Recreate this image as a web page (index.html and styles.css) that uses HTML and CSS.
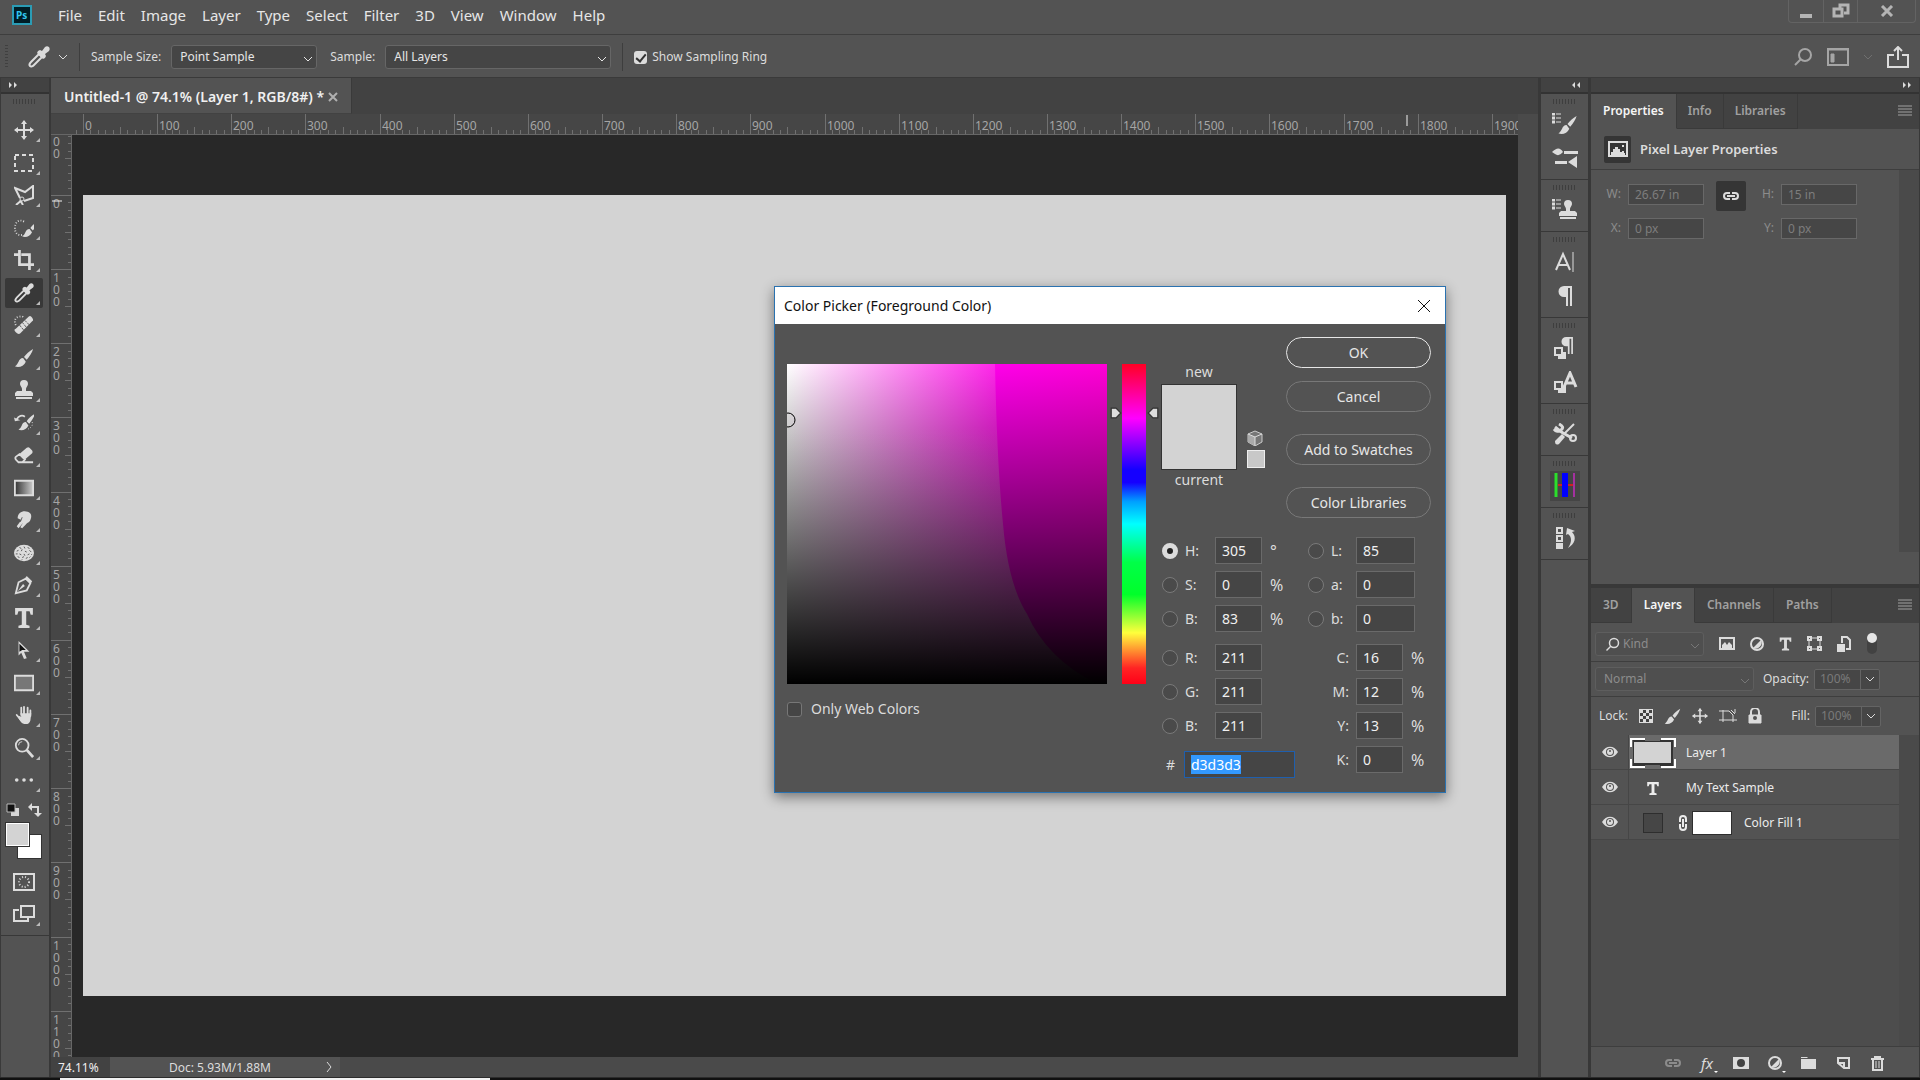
FILE: index.html
```html
<!DOCTYPE html>
<html lang="en">
<head>
    <meta charset="UTF-8">
    <meta name="viewport" content="width=device-width, initial-scale=1.0">
    <title>Untitled-1 @ 74.1%</title>
    <link rel="stylesheet" href="styles.css">
</head>
<body>
    <svg class="defs" aria-hidden="true">
        <symbol id="chevron" viewBox="0 0 10 10"><path d="M1 3l4 4 4-4" fill="none" stroke="currentColor"/></symbol>
        <symbol id="brush" viewBox="0 0 22 22"><path d="M21 1c-4 2-8 6-10 9l3 3c3-4 6-8 7-12zM10 11c-3 0-4 2-5 4-1 2-2 4-4 5 4 2 10 0 12-5z" fill="currentColor"/></symbol>
        <symbol id="move" viewBox="0 0 20 20"><path d="M10 1v18M1 10h18" stroke="currentColor" stroke-width="2"/><path d="M10 0l3 4H7zM10 20l3-4H7zM0 10l4-3v6zM20 10l-4-3v6z" fill="currentColor"/></symbol>
        <symbol id="dropper" viewBox="0 0 22 22"><path d="M2 20c-1-1 0-3 1-4l8-8 3 3-8 8c-1 1-3 2-4 1z" fill="none" stroke="currentColor" stroke-width="2"/><path d="M10 5l2-1 2 1 3-4c3-2 6 1 4 4l-4 3 1 2-1 2-2 1-6-6z" fill="currentColor"/></symbol>
        <symbol id="stamp" viewBox="0 0 20 20"><path d="M10 0a4 4 0 0 1 4 4c0 2-2 3-2 5v2h5l2 2v3H1v-3l2-2h5V9c0-2-2-3-2-5a4 4 0 0 1 4-4zM2 17h16v2H2z" fill="currentColor"/></symbol>
        <symbol id="type" viewBox="0 0 18 18"><path d="M1 0h16v6h-2l-1-3h-3v12l3 1v2H4v-2l3-1V3H4L3 6H1z" fill="currentColor"/></symbol>
        <symbol id="half" viewBox="0 0 14 14"><circle cx="7" cy="7" r="6" fill="none" stroke="currentColor" stroke-width="2"/><path d="M11 3A6 6 0 0 1 3 11z" fill="currentColor"/></symbol>
        <symbol id="link" viewBox="0 0 18 10"><path d="M8 2H5a3 3 0 0 0 0 6h3M10 2h3a3 3 0 0 1 0 6h-3M5 5h8" fill="none" stroke="currentColor" stroke-width="2"/></symbol>
        <symbol id="search" viewBox="0 0 20 20"><circle cx="12" cy="8" r="6" fill="none" stroke="currentColor" stroke-width="2"/><path d="M8 12l-6 6" stroke="currentColor" stroke-width="2"/></symbol>
        <symbol id="eye" viewBox="0 0 16 12"><path d="M0 6c4-7 12-7 16 0-4 7-12 7-16 0z" fill="currentColor"/><circle cx="8" cy="6" r="4" fill="#535353"/><circle cx="8" cy="6" r="3" fill="currentColor"/><circle cx="8" cy="5" r="1" fill="#535353"/></symbol>
        <symbol id="lines" viewBox="0 0 14 12"><path d="M0 2h14M0 5h14M0 8h14M0 11h14" stroke="currentColor"/></symbol>
        <symbol id="list" viewBox="0 0 10 12"><path d="M0 1h3M0 5h3M0 9h3" stroke="currentColor" stroke-width="3"/><path d="M4 1h5M4 5h5M4 9h5" stroke="currentColor"/></symbol>
        <symbol id="pilcrow" viewBox="0 0 16 20"><path d="M15 0v20h-2V2h-2v18H9v-9H7A5 5 0 0 1 7 0z" fill="currentColor"/></symbol>
        <symbol id="squares" viewBox="0 0 12 12"><path d="M5 5h7v7H4V9h4V5z" fill="currentColor"/><path d="M1 1h7v7H1z" fill="#535353" stroke="currentColor" stroke-width="2"/></symbol>
    </svg>

    <header class="menubar">
        <svg class="app-logo" viewBox="0 0 20 20"><rect x="1" y="1" width="18" height="18" fill="#001d26" stroke="#2b9cb5" stroke-width="2"/><text x="4" y="14">Ps</text></svg>
        <nav class="menus">
            <button>File</button><button>Edit</button><button>Image</button><button>Layer</button><button>Type</button><button>Select</button><button>Filter</button><button>3D</button><button>View</button><button>Window</button><button>Help</button>
        </nav>
        <div class="window-buttons">
            <button aria-label="Minimize"><svg width="14" height="16" viewBox="0 0 14 16"><path d="M1 11h12v4H1z" fill="currentColor"/></svg></button>
            <button aria-label="Restore"><svg width="18" height="16" viewBox="0 0 18 16"><path d="M8 5V2h8v8h-4M2 6h8v7H2z" fill="none" stroke="currentColor" stroke-width="3"/></svg></button>
            <button aria-label="Close"><svg width="14" height="12" viewBox="0 0 14 12"><path d="M2 1l10 10M12 1L2 11" stroke="currentColor" stroke-width="3"/></svg></button>
        </div>
    </header>

    <div class="optionsbar">
        <span class="side-grip"></span>
        <svg class="option-tool" viewBox="0 0 22 22"><use href="#dropper"/></svg>
        <svg class="chev" viewBox="0 0 10 10"><use href="#chevron"/></svg>
        <span class="divider"></span>
        <label for="sampleSize">Sample Size:</label>
        <span class="select size-select"><select id="sampleSize"><option>Point Sample</option></select><svg class="chev"><use href="#chevron"/></svg></span>
        <label for="sample">Sample:</label>
        <span class="select sample-select"><select id="sample"><option>All Layers</option></select><svg class="chev"><use href="#chevron"/></svg></span>
        <span class="divider"></span>
        <label class="ring"><input type="checkbox" checked>Show Sampling Ring</label>
        <div class="option-right">
            <svg width="20" height="20" class="soft"><use href="#search"/></svg>
            <svg width="22" height="18" viewBox="0 0 22 18" class="soft"><path d="M1 1h20v16H1z" fill="none" stroke="currentColor" stroke-width="2"/><path d="M0 2h22M4 6h3v8H4z" stroke="currentColor"/><path d="M4 6h3v8H4z" fill="currentColor"/></svg>
            <svg class="chev dim"><use href="#chevron"/></svg>
            <svg width="22" height="22" viewBox="0 0 22 22"><path d="M7 9H1v12h20V9h-6M11 14V1M7 5l4-4 4 4" fill="none" stroke="currentColor" stroke-width="2"/></svg>
        </div>
    </div>

    <main class="workspace">
        <aside class="toolbox">
            <div class="dock-head"><svg width="8" height="6" viewBox="0 0 8 6"><path d="M0 0v6l3-3zM5 0v6l3-3z" fill="currentColor"/></svg></div>
            <div class="grip"></div>
            <div class="tools">
                <button aria-label="Move"><svg><use href="#move"/></svg></button>
                <button aria-label="Marquee"><svg viewBox="0 0 20 20"><path d="M1 2h18v16H1z" fill="none" stroke="currentColor" stroke-width="2" stroke-dasharray="4 3"/></svg></button>
                <button aria-label="Lasso"><svg viewBox="0 0 20 20"><path d="M6 13L1 3l10 4 8-6v12l-9 3M9 14L2 20M6 15l3 5" fill="none" stroke="currentColor" stroke-width="2"/><circle cx="8" cy="14" r="2" fill="#535353" stroke="currentColor"/></svg></button>
                <button aria-label="Quick selection"><svg viewBox="0 0 22 22"><path d="M11 4C6 1 1 4 1 11s5 9 9 7" fill="none" stroke="currentColor" stroke-width="2" stroke-dasharray="1 2"/><svg x="8" y="2" width="15" height="17"><use href="#brush"/></svg></svg></button>
                <button aria-label="Crop"><svg viewBox="0 0 22 22"><path d="M6 0v16h10M0 5h5M8 5h9v17M18 16h4" fill="none" stroke="currentColor" stroke-width="3"/></svg></button>
                <button class="active" aria-label="Eyedropper"><svg><use href="#dropper"/></svg></button>
                <button aria-label="Healing brush"><svg viewBox="0 0 22 22"><path d="M2 11C0 7 1 3 5 2s5 0 5 1" fill="none" stroke="currentColor" stroke-dasharray="1 2" stroke-width="2"/><path d="M2 15L16 2q2-2 4 1t0 4L7 20q-2 2-5-1t0-4z" fill="currentColor"/><path d="M6 11l5 6M9 8l5 6M12 6l5 5" stroke="#535353" stroke-dasharray="3 1"/></svg></button>
                <button aria-label="Brush"><svg><use href="#brush"/></svg></button>
                <button aria-label="Clone stamp"><svg><use href="#stamp"/></svg></button>
                <button aria-label="History brush"><svg viewBox="0 0 22 22"><svg x="4" width="18" height="22"><use href="#brush"/></svg><path d="M3 7c2-4 6-5 9-3" fill="none" stroke="currentColor" stroke-width="2"/><path d="M0 5l1 4 6-1z" fill="currentColor"/><path d="M20 10c1 4-1 6-5 8" fill="none" stroke="currentColor" stroke-dasharray="1 2"/></svg></button>
                <button aria-label="Eraser"><svg viewBox="0 0 22 22"><path d="M6 10l8-7q2-1 3 0l3 3q1 2 0 3l-8 7z" fill="currentColor"/><path d="M6 10l6 6-3 3H5l-3-3q-1-2 0-3zM8 19h13" fill="none" stroke="currentColor" stroke-width="2"/></svg></button>
                <button aria-label="Gradient"><svg viewBox="0 0 22 18"><defs><linearGradient id="toolGradient"><stop stop-color="#333"/><stop offset="1" stop-color="#ccc"/></linearGradient></defs><path d="M1 1h20v16H1z" fill="url(#toolGradient)" stroke="currentColor" stroke-width="2"/></svg></button>
                <button aria-label="Smudge"><svg viewBox="0 0 22 22"><path d="M4 9c0-6 6-9 11-7 4 1 5 5 3 9-1 3-4 3-5 5l-4 4-2-1 3-5-5 6-2-2 5-7z" fill="currentColor"/><path d="M9 8l-2 5" stroke="#535353"/></svg></button>
                <button aria-label="Sponge"><svg viewBox="0 0 22 22"><ellipse cx="11" cy="11" rx="11" ry="9" fill="currentColor"/><path d="M6 5l2 1M11 4l1 2M15 5l2 1M3 9l2-1M8 9l1-2M12 9l2 1M17 8l2 2M2 12h2M6 12l2 1M11 12l1 2M15 13l2-1M19 13l1-1M4 15l2 1M9 16l2-1M13 17l2-1M17 16l1-1M8 19l1-1" stroke="#535353"/></svg></button>
                <button aria-label="Pen"><svg viewBox="0 0 22 22"><path d="M2 20L5 8l8-4 5 5-4 8z" fill="none" stroke="currentColor" stroke-width="2"/><path d="M14 1l6 6-2 3-6-6zM10 10l2 2-8 6z" fill="currentColor"/></svg></button>
                <button aria-label="Type"><svg><use href="#type"/></svg></button>
                <button aria-label="Path selection"><svg viewBox="0 0 22 22"><path d="M5 1l12 12h-6l3 7-3 1-3-7-3 3z" fill="currentColor"/><path d="M6 4v9l3-2h4z" fill="#111"/></svg></button>
                <button aria-label="Rectangle"><svg viewBox="0 0 22 18"><path d="M1 1h20v16H1z" fill="#777" stroke="currentColor" stroke-width="2"/></svg></button>
                <button aria-label="Hand"><svg viewBox="0 0 22 22"><path d="M8 11V3M11 10V2M15 10V3M18 12V6M3 11l5 6" stroke="currentColor" stroke-width="2" stroke-linecap="round"/><path d="M7 9h12l-1 8q-1 4-5 4c-5 0-6-3-9-8l2-1 2 1z" fill="currentColor"/></svg></button>
                <button aria-label="Zoom"><svg viewBox="0 0 22 22"><circle cx="9" cy="8" r="7" fill="none" stroke="currentColor" stroke-width="2"/><path d="M14 13l7 8" stroke="currentColor" stroke-width="3"/><path d="M5 8q0-4 4-4" fill="none" stroke="currentColor"/></svg></button>
                <button aria-label="More tools"><svg viewBox="0 0 22 22"><circle cx="3" cy="11" r="2"/><circle cx="11" cy="11" r="2"/><circle cx="19" cy="11" r="2"/></svg></button>
            </div>
            <div class="color-tools">
                <svg width="14" height="14" viewBox="0 0 14 14"><path d="M5 5h8v8H5z" fill="#d6d6d6"/><path d="M1 1h8v8H1z" fill="#111" stroke="#bbb"/></svg>
                <svg width="14" height="14" viewBox="0 0 14 14"><path d="M3 4h7v7" fill="none" stroke="currentColor" stroke-width="2"/><path d="M0 4l4-4v8zM10 14l-4-4h8z" fill="currentColor"/></svg>
            </div>
            <div class="swatches"><button class="back" aria-label="Background color"></button><button class="front" aria-label="Foreground color"></button></div>
            <div class="view-tools">
                <button aria-label="Quick mask"><svg viewBox="0 0 22 18"><path d="M1 1h20v16H1z" fill="none" stroke="currentColor" stroke-width="2"/><circle cx="11" cy="9" r="5" fill="none" stroke="currentColor" stroke-width="2" stroke-dasharray="1 2"/></svg></button>
                <button aria-label="Screen mode"><svg viewBox="0 0 22 18"><path d="M6 5H1v11h14v-4M8 1h13v11H8z" fill="none" stroke="currentColor" stroke-width="2"/></svg></button>
            </div>
        </aside>

        <section class="document">
            <div class="doc-tabs"><div class="doc-tab"><span>Untitled-1 @ 74.1% (Layer 1, RGB/8#) *</span><button aria-label="Close document"><svg width="10" height="10" viewBox="0 0 10 10"><path d="M1 1l8 8M9 1L1 9" stroke="currentColor" stroke-width="2"/></svg></button></div></div>
            <div class="doc-area">
                <div class="ruler-corner"></div>
                <svg class="ruler ruler-top" id="rulerTop"></svg>
                <div class="scroll-top"></div>
                <svg class="ruler ruler-left" id="rulerLeft"></svg>
                <div class="canvas"><div class="artboard"></div></div>
                <div class="scroll-side"></div>
            </div>
            <footer class="statusbar"><span class="zoom-level">74.11%</span><span class="doc-size">Doc: 5.93M/1.88M</span><button aria-label="Status options"><svg width="6" height="12" viewBox="0 0 6 12"><path d="M1 1l4 5-4 5" fill="none" stroke="currentColor"/></svg></button></footer>
        </section>

        <aside class="icon-dock">
            <div class="dock-head right"><svg width="8" height="6" viewBox="0 0 8 6"><path d="M3 0v6L0 3zM8 0v6L5 3z" fill="currentColor"/></svg></div>
            <div class="dock-group"><div class="grip"></div>
                <button aria-label="Brushes"><svg viewBox="0 0 26 22"><svg width="10" height="12"><use href="#list"/></svg><svg x="5" y="2" width="21" height="20"><use href="#brush"/></svg></svg></button>
                <button aria-label="Brush settings"><svg viewBox="0 0 26 22"><path d="M0 5q7-7 11 0-4 5-8 2zM12 4h14v3H12zM3 14h12v3H3zM16 15l9-6v12z" fill="currentColor"/></svg></button>
            </div>
            <div class="dock-group"><div class="grip"></div>
                <button aria-label="Clone source"><svg viewBox="0 0 26 22"><svg width="10" height="12"><use href="#list"/></svg><svg x="6" y="1" width="20" height="20"><use href="#stamp"/></svg></svg></button>
            </div>
            <div class="dock-group"><div class="grip"></div>
                <button aria-label="Character"><svg viewBox="0 0 26 22"><path d="M4 19L11 3l7 16M7 14h8" fill="none" stroke="currentColor" stroke-width="2"/><path d="M21 1v20" stroke="currentColor"/></svg></button>
                <button aria-label="Paragraph"><svg viewBox="0 0 26 22"><svg x="5" y="1" width="16" height="20"><use href="#pilcrow"/></svg></svg></button>
            </div>
            <div class="dock-group"><div class="grip"></div>
                <button aria-label="Paragraph styles"><svg viewBox="0 0 26 22"><svg x="8" width="14" height="17"><use href="#pilcrow"/></svg><svg x="2" y="10" width="12" height="12"><use href="#squares"/></svg></svg></button>
                <button aria-label="Character styles"><svg viewBox="0 0 26 22"><path d="M12 16L18 2l6 14M14 12h8" fill="none" stroke="currentColor" stroke-width="3"/><svg x="2" y="10" width="12" height="12"><use href="#squares"/></svg></svg></button>
            </div>
            <div class="dock-group"><div class="grip"></div>
                <button aria-label="Tool presets"><svg viewBox="0 0 26 22"><path d="M3 4l5 4 3 2 9 5M2 6q3 4 7 1t-2-6" fill="none" stroke="currentColor" stroke-width="3"/><path d="M22 1L12 11" stroke="currentColor" stroke-width="2"/><path d="M10 11l3 3-6 7q-4 2-4-3z" fill="currentColor"/><circle cx="21" cy="15" r="3" fill="none" stroke="currentColor" stroke-width="2"/></svg></button>
            </div>
            <div class="dock-group"><div class="grip"></div>
                <button aria-label="Color channels"><svg class="channel-icon" viewBox="0 0 30 30"><path d="M0 0h30v30H0z" fill="#454545"/><path d="M6 2v24" stroke="#2bdf2b" stroke-width="3"/><path d="M15 2v24" stroke="#00f" stroke-width="6"/><path d="M24 2v24" stroke="#a3319f" stroke-width="2"/><path d="M8 14h4M18 14h5" stroke="#c22" stroke-width="2"/></svg></button>
            </div>
            <div class="dock-group"><div class="grip"></div>
                <button aria-label="History"><svg viewBox="0 0 26 22"><path d="M5 1h5v5H5zM5 9h5v5H5z" fill="none" stroke="currentColor" stroke-width="2"/><path d="M4 16h7v6H4z" fill="currentColor"/><path d="M14 8l1-7 8 3-3 1c5 5 3 12-4 16 4-6 4-11 0-14z" fill="currentColor"/></svg></button>
            </div>
        </aside>

        <aside class="panels">
            <div class="dock-head right"><svg width="8" height="6" viewBox="0 0 8 6"><path d="M0 0v6l3-3zM5 0v6l3-3z" fill="currentColor"/></svg></div>
            <section class="panel properties">
                <div class="panel-tabs"><button class="active">Properties</button><button>Info</button><button>Libraries</button><svg width="14" height="12"><use href="#lines"/></svg></div>
                <div class="prop-title"><span class="prop-icon"><svg width="20" height="16" viewBox="0 0 20 16"><path d="M1 1h18v14H1z" fill="none" stroke="currentColor" stroke-width="2"/><path d="M3 14v-3h2V8h2V6h3v2h2v3h2v-1h2v2h1v2zM14 4h2v2h-2z" fill="currentColor"/></svg></span>Pixel Layer Properties</div>
                <div class="prop-body">
                    <div class="prop-fields">
                        <label for="pw">W:</label><input id="pw" value="26.67 in" disabled>
                        <button class="link-size" aria-label="Link width and height"><svg width="18" height="10"><use href="#link"/></svg></button>
                        <label for="ph">H:</label><input id="ph" value="15 in" disabled>
                        <label for="px">X:</label><input id="px" value="0 px" disabled>
                        <label for="py" class="label-y">Y:</label><input id="py" value="0 px" disabled>
                    </div>
                    <div class="track"></div>
                </div>
            </section>
            <section class="panel layers">
                <div class="panel-tabs"><button>3D</button><button class="active">Layers</button><button>Channels</button><button>Paths</button><svg width="14" height="12"><use href="#lines"/></svg></div>
                <div class="layer-row filter-row">
                    <span class="select kind"><svg class="kind-icon"><use href="#search"/></svg><select aria-label="Filter kind"><option>Kind</option></select><svg class="chev"><use href="#chevron"/></svg></span>
                    <svg width="16" height="14" viewBox="0 0 16 14"><path d="M1 1h14v11H1z" fill="none" stroke="currentColor" stroke-width="2"/><path d="M3 11V8l3-3 2 3 2-3 3 3v3z" fill="currentColor"/></svg>
                    <svg width="14" height="14"><use href="#half"/></svg>
                    <svg width="13" height="14"><use href="#type"/></svg>
                    <svg width="15" height="15" viewBox="0 0 15 15"><path d="M2 2h11v11H2z" fill="none" stroke="currentColor"/><path d="M0 0h5v5H0zM10 0h5v5h-5zM0 10h5v5H0zM10 10h5v5h-5z" fill="currentColor"/><path d="M2 2h1v1H2zM12 2h1v1h-1zM2 12h1v1H2zM12 12h1v1h-1z" fill="#535353"/></svg>
                    <svg width="14" height="16" viewBox="0 0 14 16"><path d="M5 7V1h5l3 3v9H9" fill="none" stroke="currentColor" stroke-width="2"/><path d="M0 8h8v8H0z" fill="currentColor"/></svg>
                    <svg width="12" height="24" viewBox="0 0 12 24"><rect x="1" y="2" width="10" height="20" rx="5" fill="#424242"/><circle cx="6" cy="6" r="5" fill="#e6e6e6"/></svg>
                </div>
                <div class="layer-row blend-row">
                    <span class="select blend"><select aria-label="Blend mode"><option>Normal</option></select><svg class="chev"><use href="#chevron"/></svg></span>
                    <label for="opacity">Opacity:</label><span class="percent"><input id="opacity" value="100%"><button aria-label="Opacity slider"><svg class="chev"><use href="#chevron"/></svg></button></span>
                </div>
                <div class="layer-row lock-row">
                    <span>Lock:</span>
                    <svg width="14" height="14" viewBox="0 0 14 14"><path d="M0 0h14v14H0z" fill="currentColor"/><path d="M4 1h3v3H4zM10 1h3v3h-3zM1 4h3v3H1zM7 4h3v3H7zM4 7h3v3H4zM10 7h3v3h-3zM1 10h3v3H1zM7 10h3v3H7z" fill="#424242"/></svg>
                    <svg width="17" height="17"><use href="#brush"/></svg>
                    <svg width="16" height="16"><use href="#move"/></svg>
                    <svg width="18" height="14" viewBox="0 0 18 14"><path d="M4 1v12M0 2h10l4 4v7M0 11h18M12 1l4 4M16 0v4" fill="none" stroke="currentColor"/></svg>
                    <svg width="14" height="16" viewBox="0 0 14 16"><path d="M1 7h12v8H1z" fill="currentColor" stroke="currentColor"/><path d="M3 7V4a4 4 0 0 1 8 0v3" fill="none" stroke="currentColor" stroke-width="2"/><circle cx="7" cy="10" r="2" fill="#535353"/></svg>
                    <label for="fill">Fill:</label><span class="percent"><input id="fill" value="100%"><button aria-label="Fill slider"><svg class="chev"><use href="#chevron"/></svg></button></span>
                </div>
                <div class="layer-list">
                    <ul>
                        <li class="selected"><button class="visibility" aria-label="Layer 1 visibility"><svg width="16" height="12"><use href="#eye"/></svg></button><div class="layer-info"><svg width="46" height="30" viewBox="0 0 46 30"><path d="M3 2h40v26H3z" fill="#333"/><path d="M4 4h37v21H4z" fill="#d3d3d3"/><path d="M15 2h15M15 28h15" stroke="#6a6a6a" stroke-width="2"/><path d="M1 9V1h14M31 1h14v8M1 21v8h14M31 29h14v-8" fill="none" stroke="#fff" stroke-width="2"/></svg><span>Layer 1</span></div></li>
                        <li><button class="visibility" aria-label="Text layer visibility"><svg width="16" height="12"><use href="#eye"/></svg></button><div class="layer-info"><svg width="46" height="13"><use href="#type"/></svg><span>My Text Sample</span></div></li>
                        <li><button class="visibility" aria-label="Fill layer visibility"><svg width="16" height="12"><use href="#eye"/></svg></button><div class="layer-info fill-layer"><span class="fill-thumb"></span><svg width="10" height="18" viewBox="0 0 10 18"><path d="M2 8V5a3 3 0 0 1 6 0v3M2 10v3a3 3 0 0 0 6 0v-3M5 5v8" fill="none" stroke="currentColor" stroke-width="2"/></svg><span class="mask-thumb"></span><span>Color Fill 1</span></div></li>
                    </ul>
                    <div class="track"></div>
                </div>
                <footer class="layer-actions">
                    <button class="off" aria-label="Link layers"><svg width="18" height="10"><use href="#link"/></svg></button>
                    <button class="fx" aria-label="Layer effects">fx</button>
                    <button aria-label="Add mask"><svg width="16" height="12" viewBox="0 0 16 12"><path d="M0 0h16v12H0z" fill="currentColor"/><circle cx="8" cy="6" r="4" fill="#424242"/></svg></button>
                    <button class="more" aria-label="Adjustment layer"><svg width="14" height="14"><use href="#half"/></svg></button>
                    <button aria-label="Group"><svg width="16" height="12" viewBox="0 0 16 12"><path d="M0 0h6l1 1h-7zM0 2h15v10H0z" fill="currentColor"/></svg></button>
                    <button aria-label="New layer"><svg width="13" height="12" viewBox="0 0 13 12"><path d="M1 6V1h11v10H7zM1 6h6v5" fill="none" stroke="currentColor" stroke-width="2"/></svg></button>
                    <button aria-label="Delete layer"><svg width="13" height="15" viewBox="0 0 13 15"><path d="M0 3h13M4 3V1h5v2M2 4v10h9V4" fill="none" stroke="currentColor" stroke-width="2"/><path d="M5 5v7M8 5v7" stroke="currentColor"/></svg></button>
                </footer>
            </section>
        </aside>
    </main>
    <div class="screen-edge"><span></span></div>

    <form class="dialog" aria-label="Color Picker">
        <header>Color Picker (Foreground Color)<button type="button" aria-label="Close"><svg width="14" height="14" viewBox="0 0 14 14"><path d="M1 1l12 12M13 1L1 13" stroke="currentColor"/></svg></button></header>
        <div class="dialog-body">
            <div class="field-col">
                <svg class="color-field" viewBox="0 0 320 320">
                    <defs>
                        <linearGradient id="hueGradient" gradientUnits="userSpaceOnUse" x1="0" x2="225" y1="0" y2="0"><stop stop-color="#fff"/><stop offset="1" stop-color="#ff14e8"/></linearGradient>
                        <linearGradient id="deepGradient"><stop offset=".6" stop-color="#ff00ec"/><stop offset="1" stop-color="#ff00d6"/></linearGradient>
                        <linearGradient id="grayGradient" x2="0" y2="1"><stop offset=".2" stop-color="#e0e0e0" stop-opacity="0"/><stop offset=".85" stop-color="#e0e0e0" stop-opacity=".5"/></linearGradient>
                        <linearGradient id="blackGradient" x2="0" y2="1"><stop stop-color="#000" stop-opacity="0"/><stop offset="1" stop-color="#000"/></linearGradient>
                    </defs>
                    <rect width="320" height="320" fill="url(#deepGradient)"/>
                    <path d="M0 0h208q2 100 8 160 5 60 24 90 20 45 70 70H0z" fill="url(#hueGradient)"/>
                    <path d="M0 0h208q2 100 8 160 5 60 24 90 20 45 70 70H0z" fill="url(#grayGradient)"/>
                    <rect width="320" height="320" fill="url(#blackGradient)"/>
                    <circle cx="1" cy="56" r="7" fill="none" stroke="#000"/>
                </svg>
                <label class="web-colors"><input type="checkbox">Only Web Colors</label>
            </div>
            <div class="hue-bar">
                <svg class="arrow arrow-left" viewBox="0 0 10 10"><path d="M1 1h4l4 4-4 4H1z" fill="#ddd" stroke="#333"/></svg>
                <svg class="arrow arrow-right" viewBox="0 0 10 10"><path d="M9 1H5L1 5l4 4h4z" fill="#ddd" stroke="#333"/></svg>
            </div>
            <div class="value-col">
                <div class="picker-top">
                    <div class="preview"><span>new</span><div class="preview-color"></div><span>current</span></div>
                    <div class="web-safe"><svg width="16" height="16" viewBox="0 0 16 16"><path d="M1 4l7-3 7 3v8l-7 4-7-4z" fill="#777" stroke="#ccc"/><path d="M1 4l7 3v9l-7-4z" fill="#aaa"/><path d="M1 4l7 3 7-3M8 7v9" fill="none" stroke="#ddd"/></svg><span></span></div>
                    <div class="dialog-buttons"><button type="button" class="ok">OK</button><button type="button">Cancel</button><button type="button" class="apart">Add to Swatches</button><button type="button" class="apart">Color Libraries</button></div>
                </div>
                <div class="values">
                    <div class="values-left">
                        <div class="value"><input type="radio" name="mode" id="mH" checked><label for="mH">H:</label><input type="text" aria-label="Hue" value="305"><span>°</span></div>
                        <div class="value"><input type="radio" name="mode" id="mS"><label for="mS">S:</label><input type="text" aria-label="Saturation" value="0"><span>%</span></div>
                        <div class="value"><input type="radio" name="mode" id="mV"><label for="mV">B:</label><input type="text" aria-label="Brightness" value="83"><span>%</span></div>
                        <div class="value second"><input type="radio" name="mode" id="mR"><label for="mR">R:</label><input type="text" aria-label="Red" value="211"></div>
                        <div class="value"><input type="radio" name="mode" id="mG"><label for="mG">G:</label><input type="text" aria-label="Green" value="211"></div>
                        <div class="value"><input type="radio" name="mode" id="mB"><label for="mB">B:</label><input type="text" aria-label="Blue" value="211"></div>
                        <div class="value hex"><label for="hex">#</label><input type="text" id="hex" value="d3d3d3"></div>
                    </div>
                    <div class="values-right">
                        <div class="value"><input type="radio" name="mode" id="mL"><label for="mL">L:</label><input type="text" aria-label="Lightness" value="85"></div>
                        <div class="value"><input type="radio" name="mode" id="ma"><label for="ma">a:</label><input type="text" aria-label="Lab a" value="0"></div>
                        <div class="value"><input type="radio" name="mode" id="mb"><label for="mb">b:</label><input type="text" aria-label="Lab b" value="0"></div>
                        <div class="value cmyk second"><label for="vC">C:</label><input type="text" id="vC" value="16"><span>%</span></div>
                        <div class="value cmyk"><label for="vM">M:</label><input type="text" id="vM" value="12"><span>%</span></div>
                        <div class="value cmyk"><label for="vY">Y:</label><input type="text" id="vY" value="13"><span>%</span></div>
                        <div class="value cmyk"><label for="vK">K:</label><input type="text" id="vK" value="0"><span>%</span></div>
                    </div>
                </div>
            </div>
        </div>
    </form>

    <script>
        const SVG = 'http://www.w3.org/2000/svg';
        const zoom = 0.7415;

        function add(parent, name, attrs, text) {
            const el = document.createElementNS(SVG, name);
            for (const key in attrs) el.setAttribute(key, attrs[key]);
            if (text !== undefined) el.textContent = text;
            parent.appendChild(el);
        }

        // origin is where the zero mark sits inside the ruler
        function drawRuler(id, vertical, origin, last) {
            const ruler = document.getElementById(id);
            let d = '';
            for (let v = -100; v <= last; v += 10) {
                const p = Math.round(origin + v * zoom) + 0.5;
                if (p < 0) continue;
                const len = v % 100 === 0 ? 21 : v % 50 === 0 ? 7 : 4;
                d += vertical ? `M21 ${p}h-${len}` : `M${p} 20v-${len}`;
            }
            for (let v = -100; v <= last; v += 100) {
                const p = Math.round(origin + v * zoom);
                const label = String(Math.abs(v));
                if (vertical) {
                    [...label].forEach((c, i) => add(ruler, 'text', { x: 2, y: p + 13 + i * 12 }, c));
                } else if (v >= 0 && v < 2000) {
                    add(ruler, 'text', { x: p + 2, y: 16 }, label);
                }
            }
            add(ruler, 'path', { d: d, class: 'ticks' });
            add(ruler, 'path', { d: vertical ? 'M1 66h10' : 'M1335 1v11', class: 'cursor-mark' });
        }

        drawRuler('rulerTop', false, 11, 2000);
        drawRuler('rulerLeft', true, 60, 1240);

        const hex = document.getElementById('hex');
        hex.focus();
        hex.select();
    </script>
</body>
</html>
```
FILE: styles.css
```css
* {
    box-sizing: border-box;
}
body {
    margin: 0;
    height: 100vh;
    display: flex;
    flex-direction: column;
    overflow: hidden;
    background: #535353;
    color: #dcdcdc;
    font-family: "Noto Sans", "Open Sans", sans-serif;
    font-size: 12px;
    line-height: 16px;
}
button, input, select {
    font: inherit;
    color: inherit;
    margin: 0;
    padding: 0;
    background: none;
    border: 0;
    border-radius: 0;
    outline: none;
}
select {
    appearance: none;
    width: 100%;
    height: 100%;
    padding-left: 8px;
}
svg {
    display: block;
    flex: none;
    fill: currentColor;
}
.defs {
    position: absolute;
    width: 0;
    height: 0;
}
.chev {
    width: 10px;
    height: 10px;
}

/* menu bar */
.menubar {
    display: flex;
    align-items: flex-start;
    height: 35px;
    flex: none;
    border-bottom: 1px solid #3e3e3e;
}
.app-logo {
    width: 20px;
    height: 20px;
    margin: 5px 0 0 12px;
}
.app-logo text {
    font-size: 10px;
    font-weight: bold;
    fill: #31c5f0;
}
.menus {
    display: flex;
    gap: 16px;
    margin-left: 26px;
    font-size: 15px;
    line-height: 31px;
    color: #e6e6e6;
}
.window-buttons {
    display: flex;
    margin-left: auto;
    margin-right: 4px;
    height: 23px;
    border: 1px solid #636363;
    border-top: 0;
    border-radius: 0 0 4px 4px;
    color: #b4b4b4;
}
.window-buttons button {
    width: 34px;
    display: grid;
    place-items: center;
}
.window-buttons button + button {
    border-left: 1px solid #636363;
}
.window-buttons button:last-child {
    width: 58px;
}

/* options bar */
.optionsbar {
    display: flex;
    align-items: center;
    height: 43px;
    flex: none;
    border-bottom: 1px solid #3a3a3a;
    padding: 2px 0 0 5px;
}
.side-grip {
    width: 3px;
    height: 24px;
    background: repeating-linear-gradient(#404040 0 1px, transparent 1px 3px);
}
.option-tool {
    width: 22px;
    height: 22px;
    margin: 0 8px 0 20px;
}
.divider {
    width: 1px;
    height: 28px;
    background: #3e3e3e;
    margin: 0 11px;
}
.select {
    position: relative;
    display: block;
    height: 24px;
    border: 1px solid #666;
    border-radius: 3px;
    background: #454545;
    color: #e6e6e6;
}
.select .chev {
    position: absolute;
    right: 3px;
    top: 8px;
}
.size-select {
    width: 146px;
    margin: 0 13px 0 10px;
}
.sample-select {
    width: 226px;
    margin-left: 10px;
}
.ring {
    display: flex;
    align-items: center;
    gap: 5px;
}
input[type="checkbox"] {
    appearance: none;
    width: 15px;
    height: 15px;
    border: 1px solid #777;
    border-radius: 3px;
    background: #454545;
}
.ring input:checked {
    width: 13px;
    height: 13px;
    background: #dcdcdc;
    display: grid;
    place-items: center;
    border: 0;
}
.ring input:checked::after {
    content: "";
    width: 4px;
    height: 8px;
    border: solid #333;
    border-width: 0 2px 2px 0;
    transform: rotate(40deg);
}
.option-right {
    display: flex;
    align-items: center;
    gap: 14px;
    margin-left: auto;
    margin-right: 11px;
}
.soft {
    color: #a5a5a5;
}
.dim {
    color: #707070;
}

/* main area */
.workspace {
    flex: 1;
    min-height: 0;
    display: flex;
    background: #383838;
    border-bottom: 1px solid #2c2c2c;
}
.dock-head {
    height: 16px;
    flex: none;
    display: flex;
    align-items: center;
    padding: 0 8px;
    background: #424242;
    border-bottom: 2px solid #333;
}
.dock-head.right {
    justify-content: flex-end;
}
.grip {
    width: 24px;
    height: 5px;
    margin: 5px auto 0;
    background: repeating-linear-gradient(90deg, #3e3e3e 0 1px, transparent 1px 3px);
}
.toolbox {
    width: 49px;
    flex: none;
    border-left: 1px solid #3a3a3a;
    background: #535353;
    display: flex;
    flex-direction: column;
}
.tools {
    height: 680px;
    margin: 11px 6px 0 4px;
    display: flex;
    flex-direction: column;
    justify-content: space-between;
}
.tools button, .view-tools button {
    position: relative;
    height: 30px;
    display: grid;
    place-items: center;
    border-radius: 2px;
}
.tools svg, .view-tools svg {
    width: 20px;
    height: 20px;
}
.tools button::after, .view-tools button:last-child::after {
    content: "";
    position: absolute;
    right: 3px;
    bottom: 3px;
    border: 2px solid transparent;
    border-right-color: #bbb;
    border-bottom-color: #bbb;
}
.tools .active {
    background: #383838;
}
.color-tools {
    display: flex;
    gap: 8px;
    margin: 8px 0 0 5px;
}
.swatches {
    position: relative;
    width: 37px;
    height: 37px;
    margin: 5px 0 0 4px;
}
.swatches button {
    position: absolute;
    width: 25px;
    height: 25px;
    border: 1px solid #333;
}
.swatches .front {
    left: 0;
    top: 0;
    background: #d3d3d3;
    box-shadow: inset 0 0 0 1px #fff;
}
.swatches .back {
    right: 0;
    bottom: 0;
    background: #fff;
}
.view-tools {
    padding: 8px 6px 6px 4px;
    border-bottom: 1px solid #383838;
    display: grid;
    gap: 2px;
}
.view-tools svg {
    width: 22px;
}

/* document window */
.document {
    flex: 1;
    min-width: 0;
    margin: 0 3px 0 2px;
    display: flex;
    flex-direction: column;
    background: #4a4a4a;
}
.doc-tabs {
    height: 36px;
    flex: none;
    display: flex;
    background: #424242;
}
.doc-tab {
    display: flex;
    gap: 4px;
    align-items: center;
    padding: 2px 13px 0;
    background: #535353;
    border-right: 1px solid #3a3a3a;
    border-bottom: 1px solid #424242;
    font-size: 14px;
    font-weight: 600;
    color: #f0f0f0;
}
.doc-tab button {
    color: #b0b0b0;
}
.doc-area {
    flex: 1;
    min-height: 0;
    display: grid;
    grid-template-columns: 21px 1fr 20px;
    grid-template-rows: 21px 1fr;
}
.ruler-corner, .ruler {
    background: #464646;
    border-bottom: 1px solid #666;
}
.ruler {
    width: 100%;
    height: 100%;
    overflow: hidden;
}
.ruler text {
    font-size: 12px;
    fill: #a5a5a5;
}
.ruler-left {
    border-bottom: 0;
    border-right: 1px solid #666;
}
.ticks {
    stroke: #707070;
}
.cursor-mark {
    stroke: #f0f0f0;
}
.canvas {
    background: #282828;
    padding: 60px 12px 61px 11px;
    display: grid;
}
.artboard {
    background: #d3d3d3;
}
.statusbar {
    height: 20px;
    flex: none;
    display: flex;
    line-height: 22px;
}
.zoom-level {
    width: 59px;
    padding-left: 7px;
    background: #424242;
    color: #eee;
}
.doc-size {
    width: 216px;
    padding-left: 59px;
    background: #535353;
}
.statusbar button {
    width: 14px;
    background: #535353;
    display: flex;
    align-items: center;
}

/* collapsed icon dock */
.icon-dock {
    width: 47px;
    flex: none;
    margin-right: 3px;
    background: #535353;
}
.dock-group {
    display: flow-root;
    padding-bottom: 4px;
    border-bottom: 1px solid #383838;
}
.dock-group .grip {
    margin-bottom: 3px;
}
.dock-group button {
    width: 100%;
    height: 34px;
    display: grid;
    place-items: center;
}
.dock-group button > svg {
    width: 26px;
    height: 22px;
}
.dock-group button > .channel-icon {
    width: 30px;
    height: 30px;
}

/* right panels */
.panels {
    width: 328px;
    flex: none;
    margin-right: 1px;
    display: flex;
    flex-direction: column;
}
.panel {
    display: flex;
    flex-direction: column;
    background: #535353;
}
.properties {
    height: 490px;
    flex: none;
    margin-bottom: 4px;
}
.layers {
    flex: 1;
    min-height: 0;
}
.panel-tabs {
    height: 35px;
    flex: none;
    display: flex;
    background: #424242;
    font-weight: 600;
    color: #a0a0a0;
}
.panel-tabs button {
    padding: 0 11px;
    border-right: 1px solid #3a3a3a;
    border-bottom: 1px solid #3a3a3a;
}
.panel-tabs button:first-child {
    padding: 0 12px;
}
.layers .panel-tabs button {
    padding: 0 12px;
}
.panel-tabs .active {
    background: #535353;
    border-bottom-color: #535353;
    color: #f5f5f5;
}
.panel-tabs svg {
    margin: 10px 7px 0 auto;
}
.prop-title {
    height: 41px;
    flex: none;
    display: flex;
    align-items: center;
    gap: 9px;
    padding-left: 13px;
    border-bottom: 1px solid #3e3e3e;
    font-size: 13px;
    font-weight: 600;
}
.prop-icon {
    width: 27px;
    height: 27px;
    display: grid;
    place-items: center;
    background: #353535;
    border-radius: 2px;
}
.prop-body {
    flex: 1;
    display: flex;
    justify-content: space-between;
}
.track {
    width: 20px;
    background: #4a4a4a;
}
.prop-body .track {
    margin-bottom: 32px;
}
.prop-fields {
    display: grid;
    grid-template-columns: 24px 76px 30px 26px 76px;
    grid-auto-rows: 21px;
    gap: 13px 7px;
    padding: 14px 0 0 6px;
    color: #8c8c8c;
    text-align: right;
    line-height: 20px;
}
.prop-fields input {
    width: 76px;
    border: 1px solid #686868;
    background: #464646;
    padding-left: 6px;
    color: #7d7d7d;
}
.link-size {
    width: 30px;
    height: 30px;
    margin: -3px 0 0 5px;
    background: #353535;
    border-radius: 2px;
    display: grid;
    place-items: center;
    color: #dcdcdc;
}
.label-y {
    grid-column: 4;
}
.layer-row {
    flex: none;
    display: flex;
    align-items: center;
    border-bottom: 1px solid #3e3e3e;
    padding-left: 4px;
}
.filter-row {
    height: 39px;
    gap: 15px;
    padding-top: 3px;
}
.layer-row .select {
    border-color: #5e5e5e;
    background: #4f4f4f;
    color: #8c8c8c;
}
.select.kind {
    width: 109px;
}
.kind select {
    padding-left: 27px;
}
.kind-icon {
    position: absolute;
    left: 9px;
    top: 4px;
    width: 15px;
    height: 15px;
    color: #dcdcdc;
}
.select.kind .chev, .select.blend .chev {
    color: #777;
}
.blend-row {
    height: 35px;
}
.select.blend {
    width: 159px;
    margin-right: 9px;
}
.blend-row label, .lock-row label {
    width: 45px;
    margin-right: 6px;
    text-align: right;
}
.percent {
    display: flex;
    width: 66px;
    height: 21px;
    border: 1px solid #646464;
    border-radius: 2px;
    background: #464646;
}
.percent input {
    width: 46px;
    padding-left: 5px;
    color: #7a7a7a;
    border-right: 1px solid #646464;
}
.percent button {
    flex: 1;
    display: grid;
    place-items: center;
}
.lock-row {
    height: 38px;
    border-bottom: 0;
    padding-left: 8px;
    gap: 11px;
}
.lock-row label {
    width: 33px;
    margin: 0 -6px 0 4px;
}
.layer-list {
    flex: 1;
    display: flex;
    background: #4d4d4d;
}
.layer-list ul {
    flex: 1;
    margin: 0;
    padding: 0;
    list-style: none;
}
.layer-list li {
    height: 35px;
    display: flex;
    background: #535353;
    border-bottom: 1px solid #464646;
}
.visibility {
    width: 38px;
    display: grid;
    place-items: center;
    border-right: 1px solid #464646;
}
.layer-info {
    flex: 1;
    display: flex;
    align-items: center;
    gap: 10px;
    padding: 2px 0 0 1px;
    color: #ececec;
}
.selected .layer-info {
    background: #6a6a6a;
}
.layer-info.fill-layer {
    gap: 0;
    padding-left: 14px;
}
.fill-thumb, .mask-thumb {
    width: 20px;
    height: 20px;
    background: #464646;
    border: 1px solid #2e2e2e;
    margin-right: 15px;
}
.mask-thumb {
    width: 40px;
    height: 24px;
    background: #fff;
    margin: 0 12px 0 4px;
}
.layer-actions {
    height: 31px;
    flex: none;
    display: flex;
    justify-content: flex-end;
    padding: 2px 25px 0 0;
    border-top: 1px solid #3e3e3e;
}
.layer-actions button {
    position: relative;
    width: 34px;
    display: grid;
    place-items: center;
}
.layer-actions .off {
    color: #8c8c8c;
}
.layer-actions .fx {
    font-size: 15px;
    font-style: italic;
}
.fx::after, .more::after {
    content: "";
    position: absolute;
    right: 6px;
    bottom: 4px;
    border: 2px solid transparent;
    border-top-color: #fff;
    border-bottom: 0;
}
.screen-edge {
    height: 2px;
    flex: none;
    background: #111;
}
.screen-edge span {
    display: block;
    width: 430px;
    height: 2px;
    margin-left: 60px;
    background: #f2f2f2;
}

/* color picker dialog, floats over the document */
.dialog {
    position: absolute;
    left: 774px;
    top: 286px;
    width: 672px;
    border: 1px solid #2a72b0;
    background: #535353;
    box-shadow: 0 4px 12px rgba(0, 0, 0, 0.45);
    font-size: 14px;
    line-height: 18px;
}
.dialog header {
    height: 37px;
    display: flex;
    align-items: center;
    justify-content: space-between;
    padding: 0 14px 0 9px;
    background: #fff;
    color: #111;
}
.dialog-body {
    display: flex;
    padding: 13px 14px 14px 12px;
}
.field-col {
    width: 320px;
    margin-top: 27px;
}
.color-field {
    width: 320px;
    height: 320px;
}
.web-colors {
    display: flex;
    align-items: center;
    gap: 9px;
    margin-top: 16px;
}
.hue-bar {
    position: relative;
    width: 24px;
    height: 320px;
    margin: 27px 15px 0;
    background: linear-gradient(#ff0024, #ff00ff 17%, #1500ff 33%, #1500ff 37%, #00a0ff 43%, #00ffff 50%, #00ff48 62%, #00ff2a 72%, #ffff3c 84%, #ff2424 95%, #ff0018);
}
.arrow {
    position: absolute;
    top: 43px;
    width: 12px;
    height: 12px;
}
.arrow-left {
    right: 24px;
}
.arrow-right {
    left: 25px;
}
.value-col {
    flex: 1;
}
.picker-top {
    display: flex;
}
.preview {
    width: 76px;
    padding-top: 26px;
    text-align: center;
}
.preview-color {
    height: 86px;
    margin: 3px 0 1px;
    border: 1px solid #333;
    background: #d3d3d3;
}
.web-safe {
    width: 18px;
    margin: 93px 21px 0 10px;
}
.web-safe span {
    display: block;
    height: 18px;
    margin-top: 4px;
    background: #c8c8c8;
    border: 1px solid #eee;
}
.dialog-buttons {
    flex: 1;
    display: flex;
    flex-direction: column;
    gap: 13px;
    color: #e6e6e6;
}
.dialog-buttons button {
    height: 31px;
    padding-top: 1px;
    border: 1px solid #787878;
    border-radius: 16px;
}
.dialog-buttons .ok {
    border-color: #e6e6e6;
}
.dialog-buttons .apart {
    margin-top: 9px;
}
.values {
    display: flex;
    justify-content: space-between;
    padding: 19px 0 0 1px;
}
.values-left, .values-right {
    display: flex;
    flex-direction: column;
    gap: 7px;
}
.values-right {
    width: 123px;
}
.value {
    display: flex;
    align-items: center;
    height: 27px;
}
.value.second, .value.hex {
    margin-top: 5px;
}
.value label {
    width: 30px;
}
.values-right .value label {
    width: 25px;
}
.value span {
    margin-left: 8px;
    font-size: 16px;
}
input[type="radio"] {
    appearance: none;
    width: 16px;
    height: 16px;
    margin-right: 7px;
    border: 1px solid #7a7a7a;
    border-radius: 50%;
    background: #4a4a4a;
}
input[type="radio"]:checked {
    border: 5px solid #dcdcdc;
    background: #222;
}
.value input[type="text"] {
    width: 47px;
    height: 27px;
    padding-left: 6px;
    border: 1px solid #6a6a6a;
    background: #454545;
    color: #f0f0f0;
}
.values-right input[type="text"] {
    width: 59px;
}
.values-right .cmyk input[type="text"] {
    width: 47px;
}
.values-right .cmyk label {
    width: 41px;
    margin-right: 7px;
    text-align: right;
}
.value.hex label {
    width: 18px;
    padding-left: 4px;
    margin-right: 4px;
}
.value.hex input[type="text"] {
    width: 111px;
    border: 1px solid #1f5fae;
}
.value.hex input::selection {
    background: #3399ff;
    color: #fff;
}
```
